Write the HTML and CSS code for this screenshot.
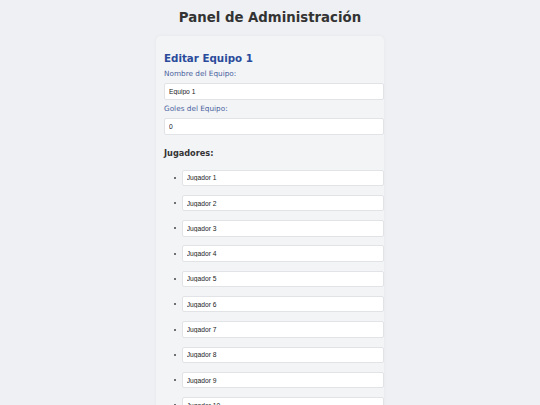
FILE: index.html
```html
<!DOCTYPE html>
<html lang="es">
<head>
  <meta charset="UTF-8" />
  <meta name="viewport" content="width=device-width, initial-scale=1.0"/>
  <title>Panel de Administración</title>
  <link rel="stylesheet" href="styles.css">
</head>
<body>
  <h1>Panel de Administración</h1>
  <div class="card">
    <h2>Editar Equipo 1</h2>
    <label for="nombre">Nombre del Equipo:</label>
    <input type="text" id="nombre" value="Equipo 1">
    <label for="goles">Goles del Equipo:</label>
    <input type="number" id="goles" value="0">

    <h3>Jugadores:</h3>
    <ul class="jugadores">
      <li><input type="text" value="Jugador 1"></li>
      <li><input type="text" value="Jugador 2"></li>
      <li><input type="text" value="Jugador 3"></li>
      <li><input type="text" value="Jugador 4"></li>
      <li><input type="text" value="Jugador 5"></li>
      <li><input type="text" value="Jugador 6"></li>
      <li><input type="text" value="Jugador 7"></li>
      <li><input type="text" value="Jugador 8"></li>
      <li><input type="text" value="Jugador 9"></li>
      <li><input type="text" value="Jugador 10"></li>
      <li><input type="text" value="Jugador 11"></li>
    </ul>
  </div>
</body>
</html>
```

FILE: styles.css
```css
body {
  font-family: "DejaVu Sans", Verdana, sans-serif;
  margin: 0;
  padding: 10px 0;
  background: #eef0f3;
  color: #333;
}
h1 {
  text-align: center;
  font-size: 13.3px;
  line-height: 15px;
  margin: 0 0 11px;
  color: #333;
}
.card {
  width: 212px;
  margin: 0 auto;
  padding: 8px;
  background: #f3f4f6;
  border-radius: 5px;
  box-shadow: 0 0 5px rgba(0,0,0,0.04);
}
h2 {
  font-size: 10.3px;
  line-height: 13px;
  color: #2a4b9b;
  margin: 8px 0 4px;
}
label {
  display: block;
  font-size: 7.3px;
  line-height: 10px;
  color: #4a63a0;
  margin-bottom: 4px;
}
input {
  display: block;
  box-sizing: border-box;
  width: calc(100% + 8px);
  height: 16.5px;
  padding: 0 4px;
  margin: 0 0 4.5px;
  font-family: "Liberation Sans", Arial, sans-serif;
  font-size: 6.7px;
  color: #222;
  background: #fff;
  border: 1px solid #e1e3e7;
  border-radius: 2px;
}
h3 {
  font-size: 8.2px;
  line-height: 10px;
  margin: 13.5px 0 11.5px;
}
.jugadores {
  list-style: none;
  margin: 0;
  padding-left: 10px;
}
.jugadores li {
  display: flex;
  align-items: center;
  margin-bottom: 8.8px;
}
.jugadores li::before {
  content: "";
  width: 2px;
  height: 2px;
  margin-right: 5.7px;
  border-radius: 50%;
  background: #444;
}
.jugadores input {
  flex: 1;
  width: auto;
  min-width: 0;
  margin: 0 -8px 0 0;
}
```
